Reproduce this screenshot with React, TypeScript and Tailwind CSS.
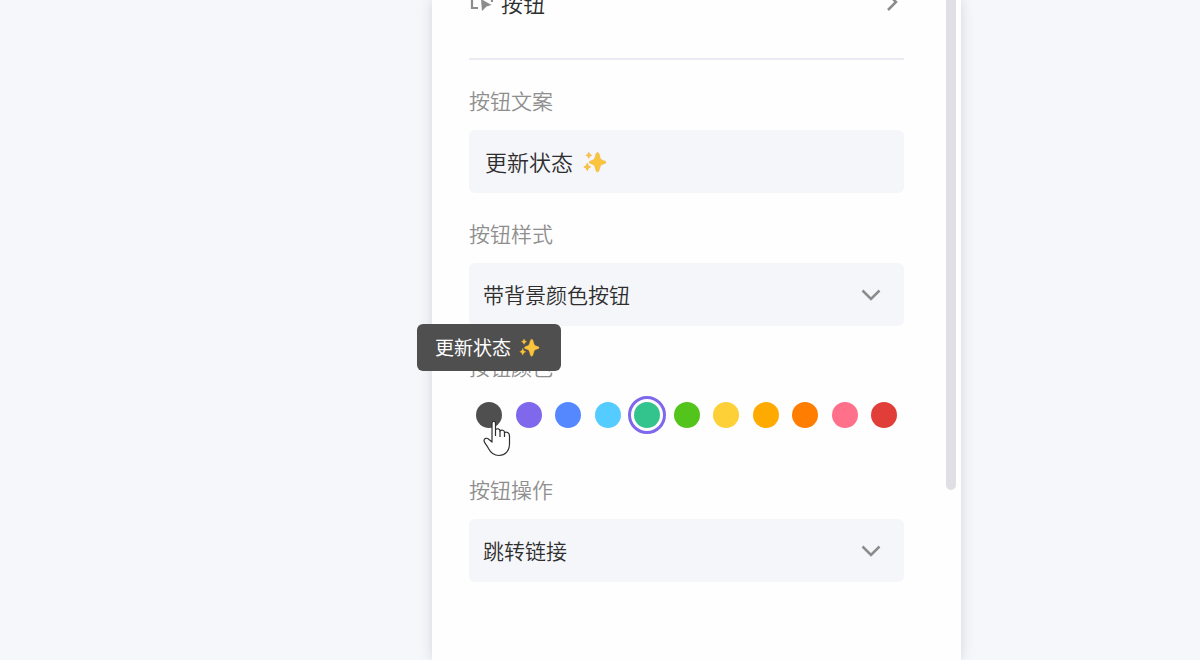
import { useState } from "react";

const colors = [
  { name: "深灰", value: "#4f4f4f", className: "bg-[#4f4f4f]" },
  { name: "紫色", value: "#7f68ec", className: "bg-[#7f68ec]" },
  { name: "蓝色", value: "#5588ff", className: "bg-[#5588ff]" },
  { name: "天蓝", value: "#55ccff", className: "bg-[#55ccff]" },
  { name: "青绿", value: "#33c38c", className: "bg-[#33c38c]" },
  { name: "绿色", value: "#53c41c", className: "bg-[#53c41c]" },
  { name: "黄色", value: "#fdd037", className: "bg-[#fdd037]" },
  { name: "琥珀", value: "#ffaa00", className: "bg-[#ffaa00]" },
  { name: "橙色", value: "#ff7d00", className: "bg-[#ff7d00]" },
  { name: "粉色", value: "#ff708b", className: "bg-[#ff708b]" },
  { name: "红色", value: "#e23e39", className: "bg-[#e23e39]" },
];

const Sparkles = ({ className }: { className: string }) => (
  <svg viewBox="0 0 24 24" className={className} fill="#fbc43d" stroke="#e9ad35" strokeWidth="0.5" role="img" aria-label="✨">
    <path d="M14.500 2.500C16.200 2.500 16.200 5 17 7.500C17.600 9.300 18.300 9.800 20 10.400C21.700 11 23 11.200 23 12.200C23 13.200 21.700 13.500 20 14.100C18.300 14.700 17.600 15.200 17 17C16.200 19.500 16 22 14.500 22C13 22 12.800 19.500 12 17C11.400 15.200 10.700 14.700 9 14.100C7.300 13.500 6.200 13.200 6.200 12.200C6.200 11.200 7.300 11 9 10.400C10.700 9.800 11.400 9.300 12 7.500C12.800 5 13 2.500 14.500 2.500Z" />
    <path d="M5.800 2.200C6.600 4.200 6.900 4.500 8.800 5.300C6.900 6.100 6.600 6.400 5.800 8.400C5 6.400 4.700 6.100 2.800 5.300C4.700 4.500 5 4.200 5.800 2.200Z" />
    <path d="M4.300 13C5.200 15.500 5.600 15.900 7.800 16.900C5.600 17.900 5.200 18.300 4.300 20.800C3.400 18.300 3 17.900 0.800 16.900C3 15.900 3.400 15.500 4.300 13Z" />
  </svg>
);

const ChevronDown = () => (
  <svg viewBox="0 0 20 12" className="pointer-events-none absolute inset-y-0 right-[23px] mt-[26px] h-3 w-5" fill="none" stroke="#8c8c8c" strokeWidth="2.5">
    <path d="M1.500 1.500L10 10L18.500 1.500" />
  </svg>
);

type SelectProps = { id: string; label: string; options: string[] };

const SelectField = ({ id, label, options }: SelectProps) => (
  <div>
    <label htmlFor={id} className="block text-[21px] leading-6 text-[#8f8f8f]">{label}</label>
    <div className="relative mt-[18px]">
      <select id={id} className="block h-[63px] w-full appearance-none rounded-md bg-[#f5f6fa] px-3.5 text-[21px] text-[#2e2e2e] outline-none">
        {options.map((option) => (
          <option key={option}>{option}</option>
        ))}
      </select>
      <ChevronDown />
    </div>
  </div>
);

const App = () => {
  const [text, setText] = useState("更新状态");
  const [color, setColor] = useState("#33c38c");

  return (
    <div className="flex min-h-screen overflow-hidden bg-[#f5f7fb] font-['Noto_Sans_CJK_SC',sans-serif] font-[350]">
      <aside className="ml-[36%] flex w-[529px] bg-[#fefefe] shadow-[0_0_12px_rgba(60,60,90,0.18)]">
        <div className="min-w-0 flex-1 pl-[37px]">
          <button type="button" className="-mt-[22px] flex h-12 w-full items-center text-left">
            <svg viewBox="0 0 24 24" className="size-6" fill="none" stroke="#8c8c8c" strokeWidth="2.2">
              <path d="M9 18H3V3H23V12" />
              <path d="M12 9L22.500 15L17.500 16.500L13 21Z" fill="#8c8c8c" stroke="none" />
            </svg>
            <span className="ml-2 flex-1 text-[22px] leading-7 text-[#2e2e2e]">按钮</span>
            <svg viewBox="0 0 12 20" className="mr-1.5 h-5 w-3" fill="none" stroke="#8c8c8c" strokeWidth="2.5">
              <path d="M2 2L10 10L2 18" />
            </svg>
          </button>
          <hr className="mt-8 border-t-2 border-[#ebebf3]" />

          <form className="mt-7 pb-8">
            <label htmlFor="button-text" className="block text-[21px] leading-6 text-[#8f8f8f]">按钮文案</label>
            <div className="mt-[18px] mb-7 flex h-[63px] items-center rounded-md bg-[#f5f6fa] px-4">
              <input
                id="button-text"
                type="text"
                value={text}
                onChange={(e) => setText(e.target.value)}
                className="field-sizing-content bg-transparent text-[22px] text-[#2e2e2e] outline-none"
              />
              <Sparkles className="ml-2.5 size-6" />
            </div>

            <SelectField id="button-style" label="按钮样式" options={["带背景颜色按钮", "文字按钮"]} />

            <fieldset className="mt-7 mb-[49px]">
              <legend className="text-[21px] leading-6 text-[#8f8f8f]">按钮颜色</legend>
              <div className="mt-6 flex justify-between px-[7px]">
                {colors.map((item, index) => (
                  <label key={item.value} className="relative">
                    <input
                      type="radio"
                      name="color"
                      aria-label={item.name}
                      checked={color === item.value}
                      onChange={() => setColor(item.value)}
                      className={`block size-[26px] appearance-none rounded-full outline-offset-3 outline-[#7f68ec] checked:outline-3 ${item.className}`}
                    />
                    {/* Preview tooltip */}
                    {index === 0 && (
                      <span role="tooltip" className="absolute bottom-full left-1/2 mb-[31px] flex h-[47px] -translate-x-1/2 items-center rounded-md bg-[#4f4f4f] pr-[21px] pl-[18px] text-[19px] font-normal whitespace-nowrap text-white">
                        {text}
                        <Sparkles className="ml-2 size-[21px]" />
                      </span>
                    )}
                    {index === 0 && (
                      <svg viewBox="0 0 28 37" className="pointer-events-none absolute top-[18px] left-[7px] h-[37px] w-7" fill="#fff" stroke="#2e2e2e" strokeWidth="1.2" strokeLinejoin="round">
                        <path d="M9 22V3.500C9 0.500 12.500 0.500 12.500 3.500V10C14 8 17 8.500 17 11C18.500 9.500 21.500 10 21.500 12.500C23.500 11.500 26.500 12.500 26.500 16V24C26.500 31 22 35.500 16 35.500C10.500 35.500 7.500 32.500 5.500 28.500C4 25 1 23 1 20.500C1 18 4 17.500 6 19.500L9 22Z" />
                        <path d="M12.500 10V16M17 11V17M21.500 12.500V17" fill="none" />
                      </svg>
                    )}
                  </label>
                ))}
              </div>
            </fieldset>

            <SelectField id="button-action" label="按钮操作" options={["跳转链接", "打开页面"]} />
          </form>
        </div>
        <div className="mr-[5px] ml-[42px] h-[490px] w-2.5 rounded-b-full bg-[#dfdfe5]" />
      </aside>
    </div>
  );
};

export default App;
